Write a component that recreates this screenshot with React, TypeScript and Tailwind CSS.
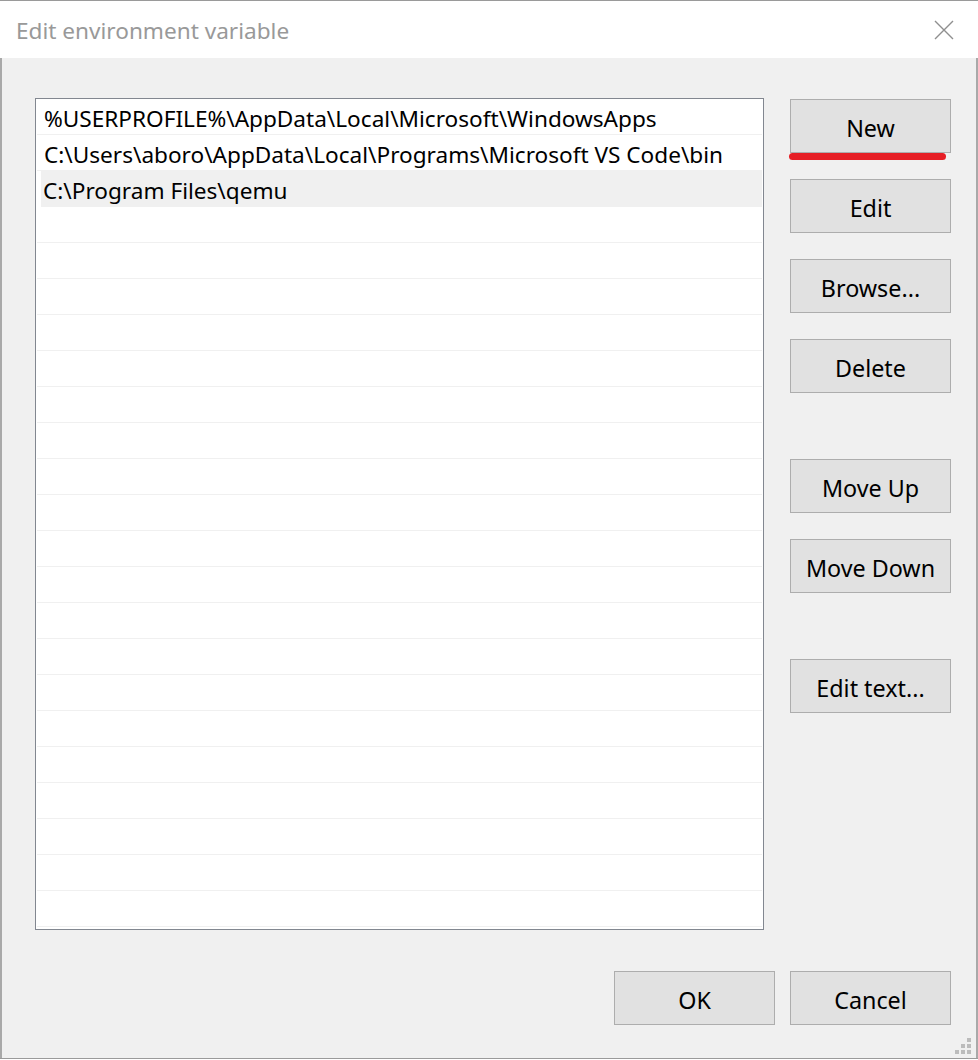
import React from "react";

const paths = [
  "%USERPROFILE%\\AppData\\Local\\Microsoft\\WindowsApps",
  "C:\\Users\\aboro\\AppData\\Local\\Programs\\Microsoft VS Code\\bin",
  "C:\\Program Files\\qemu",
];

const ROWS = 23;
const font = { fontFamily: '"Noto Sans", "Open Sans", sans-serif' };

const DlgButton = ({ label, className = "" }: { label: string; className?: string }) => (
  <button
    className={`w-[161px] h-[54px] shrink-0 bg-[#e1e1e1] border border-[#adadad] text-[23.3px] text-black leading-none pt-[5px] ${className}`}
  >
    {label}
  </button>
);

export default function App() {
  const rows = Array.from({ length: ROWS }, (_, i) => paths[i] ?? "");

  return (
    <div className="w-[978px] h-[1060px] flex flex-col bg-[#f0f0f0] overflow-hidden" style={font}>
      {/* Title bar */}
      <div className="h-[58px] shrink-0 bg-white border-t border-[#9a9a9a] flex items-center justify-between pl-[16px] pr-[24px]">
        <span className="text-[22.6px] text-[#999999] pt-[2px]">Edit environment variable</span>
        <svg width="20" height="20" viewBox="0 0 20 20" className="mt-[1px]">
          <path d="M1 1 L19 19 M19 1 L1 19" stroke="#8f8f8f" strokeWidth="1.4" />
        </svg>
      </div>

      {/* Body */}
      <div className="flex-1 flex">
        <div className="w-[2px] bg-[#a9a9a9]" />
        <div className="flex-1 flex flex-col relative">
          <div className="flex pt-[40px] pl-[33px] gap-[26px]">
            {/* Path list */}
            <div className="w-[729px] h-[832px] bg-white border border-[#828790] px-[1px] flex flex-col">
              {rows.map((p, i) => (
                <div
                  key={i}
                  className={`h-[36px] shrink-0 border-b border-[#f0f0f0] flex items-center pt-[4px] text-[22.6px] text-black whitespace-nowrap ${
                    i === 2 ? "bg-[#f0f0f0] ml-[4px] pl-[2px]" : "pl-[7px]"
                  }`}
                >
                  {p}
                </div>
              ))}
            </div>

            {/* Side buttons */}
            <div className="flex flex-col mt-[1px] relative">
              <DlgButton label="New" />
              <DlgButton label="Edit" className="mt-[26px]" />
              <DlgButton label="Browse..." className="mt-[26px]" />
              <DlgButton label="Delete" className="mt-[26px]" />
              <DlgButton label="Move Up" className="mt-[66px]" />
              <DlgButton label="Move Down" className="mt-[26px]" />
              <DlgButton label="Edit text..." className="mt-[66px]" />
              {/* red annotation underline */}
              <div className="absolute left-[-1px] top-[54px] w-[157px] h-[7px] rounded-full bg-[#e61e25]" />
            </div>
          </div>

          {/* Bottom buttons */}
          <div className="flex justify-end gap-[15px] pr-[25px] mt-[41px]">
            <DlgButton label="OK" />
            <DlgButton label="Cancel" />
          </div>

          {/* resize grip */}
          <div className="absolute right-[5px] bottom-[4px] w-[16px] h-[16px]">
            <div className="absolute left-[12px] top-0 w-[4px] h-[4px] bg-[#bcbcbc]" />
            <div className="absolute left-[6px] top-[6px] w-[4px] h-[4px] bg-[#bcbcbc]" />
            <div className="absolute left-[12px] top-[6px] w-[4px] h-[4px] bg-[#bcbcbc]" />
            <div className="absolute left-0 top-[12px] w-[4px] h-[4px] bg-[#bcbcbc]" />
            <div className="absolute left-[6px] top-[12px] w-[4px] h-[4px] bg-[#bcbcbc]" />
            <div className="absolute left-[12px] top-[12px] w-[4px] h-[4px] bg-[#bcbcbc]" />
          </div>
        </div>
        <div className="w-[2px] bg-[#a9a9a9]" />
      </div>
      <div className="h-[1px] bg-[#9a9a9a]" />
      <div className="h-[1px] bg-white" />
    </div>
  );
}
